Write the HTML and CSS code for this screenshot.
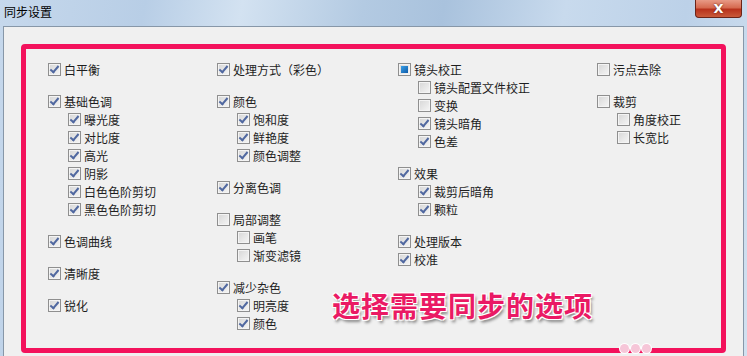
FILE: index.html
```html
<!DOCTYPE html>
<html lang="zh-CN">
<head>
<meta charset="utf-8">
<title>同步设置</title>
<link rel="stylesheet" href="styles.css">
</head>
<body>

<div class="window">
  <div class="titlebar">
    <span class="title">同步设置</span>
    <div class="close-button"><span class="close-x">X</span></div>
  </div>

  <div class="panel">
    <div class="frame">

      <div class="column">
        <div class="group">
          <div class="item"><span class="cb on"></span>白平衡</div>
        </div>
        <div class="group">
          <div class="item"><span class="cb on"></span>基础色调</div>
          <div class="item sub"><span class="cb on"></span>曝光度</div>
          <div class="item sub"><span class="cb on"></span>对比度</div>
          <div class="item sub"><span class="cb on"></span>高光</div>
          <div class="item sub"><span class="cb on"></span>阴影</div>
          <div class="item sub"><span class="cb on"></span>白色色阶剪切</div>
          <div class="item sub"><span class="cb on"></span>黑色色阶剪切</div>
        </div>
        <div class="group">
          <div class="item"><span class="cb on"></span>色调曲线</div>
        </div>
        <div class="group">
          <div class="item"><span class="cb on"></span>清晰度</div>
        </div>
        <div class="group">
          <div class="item"><span class="cb on"></span>锐化</div>
        </div>
      </div>

      <div class="column">
        <div class="group">
          <div class="item"><span class="cb on"></span>处理方式（彩色）</div>
        </div>
        <div class="group">
          <div class="item"><span class="cb on"></span>颜色</div>
          <div class="item sub"><span class="cb on"></span>饱和度</div>
          <div class="item sub"><span class="cb on"></span>鲜艳度</div>
          <div class="item sub"><span class="cb on"></span>颜色调整</div>
        </div>
        <div class="group">
          <div class="item"><span class="cb on"></span>分离色调</div>
        </div>
        <div class="group">
          <div class="item"><span class="cb"></span>局部调整</div>
          <div class="item sub"><span class="cb"></span>画笔</div>
          <div class="item sub"><span class="cb"></span>渐变滤镜</div>
        </div>
        <div class="group">
          <div class="item"><span class="cb on"></span>减少杂色</div>
          <div class="item sub"><span class="cb on"></span>明亮度</div>
          <div class="item sub"><span class="cb on"></span>颜色</div>
        </div>
      </div>

      <div class="column">
        <div class="group">
          <div class="item"><span class="cb mixed"></span>镜头校正</div>
          <div class="item sub"><span class="cb"></span>镜头配置文件校正</div>
          <div class="item sub"><span class="cb"></span>变换</div>
          <div class="item sub"><span class="cb on"></span>镜头暗角</div>
          <div class="item sub"><span class="cb on"></span>色差</div>
        </div>
        <div class="group">
          <div class="item"><span class="cb on"></span>效果</div>
          <div class="item sub"><span class="cb on"></span>裁剪后暗角</div>
          <div class="item sub"><span class="cb on"></span>颗粒</div>
        </div>
        <div class="group">
          <div class="item"><span class="cb on"></span>处理版本</div>
          <div class="item"><span class="cb on"></span>校准</div>
        </div>
      </div>

      <div class="column">
        <div class="group">
          <div class="item"><span class="cb"></span>污点去除</div>
        </div>
        <div class="group">
          <div class="item"><span class="cb"></span>裁剪</div>
          <div class="item sub"><span class="cb"></span>角度校正</div>
          <div class="item sub"><span class="cb"></span>长宽比</div>
        </div>
      </div>

      <div class="caption">选择需要同步的选项</div>
    </div>
  </div>

  <div class="watermark"><span></span><span></span><span></span></div>
</div>

</body>
</html>
```

FILE: styles.css
```css
body {
  margin: 0;
  width: 747px;
  height: 356px;
  overflow: hidden;
  font-family: "Noto Sans CJK SC", "Noto Sans", sans-serif;
  font-size: 12px;
  color: #1e1e1e;
}

.window {
  position: relative;
  height: 356px;
  overflow: hidden;
  background: linear-gradient(100deg, #c6d8ec 0%, #b8cee6 18%, #d3e2f1 30%, #b3cae2 45%, #a9c2dd 55%, #c8daed 70%, #bcd1e8 85%, #d2e1f0 100%);
}

.titlebar {
  display: flex;
  justify-content: space-between;
  align-items: flex-start;
  height: 26px;
  padding-left: 4px;
  padding-right: 5px;
}

.title {
  line-height: 24px;
  font-size: 12px;
  color: #000;
}

.close-button {
  flex: none;
  display: flex;
  justify-content: center;
  align-items: center;
  width: 45px;
  height: 17px;
  border: 1px solid #6b2418;
  border-top: none;
  border-radius: 0 0 4px 4px;
  background-color: #c8452c;
  background-image: linear-gradient(#e89a86 0%, #d66a50 45%, #b8321c 55%, #c95a3a 100%);
}

.close-x {
  color: #ffffff;
  font-family: "DejaVu Sans", sans-serif;
  font-weight: bold;
  font-size: 13px;
  line-height: 16px;
  text-shadow: 0 0 2px #5a1a10;
}

.panel {
  margin: 0 3px;
  padding: 17px 17px 3px;
  border: 1px solid #8797a8;
  background-color: #f0f0f0;
}

.frame {
  position: relative;
  display: grid;
  grid-template-columns: 169px 181px 199px 1fr;
  height: 309px;
  box-sizing: border-box;
  padding: 11px 0 0 22px;
  border: 5px solid #f3125c;
  border-radius: 4px;
}

.group {
  margin-bottom: 14px;
}

.item {
  display: flex;
  align-items: center;
  height: 18px;
  white-space: nowrap;
}

.item.sub {
  padding-left: 20px;
}

.cb {
  position: relative;
  flex: none;
  width: 11px;
  height: 11px;
  margin-right: 3px;
  border: 1px solid #8f8f8f;
  background: linear-gradient(135deg, #d6d6d6, #f6f6f6);
  box-shadow: inset 0 0 0 1px #f4f4f4;
}

.cb.on::after {
  content: "";
  position: absolute;
  left: 3px;
  top: 0px;
  width: 3px;
  height: 7px;
  border: solid #5068a0;
  border-width: 0 2px 2px 0;
  transform: rotate(40deg);
}

.cb.mixed::after {
  content: "";
  position: absolute;
  left: 2px;
  top: 2px;
  width: 7px;
  height: 7px;
  background: linear-gradient(135deg, #3aa0e8, #0e5aa8);
}

.caption {
  position: absolute;
  left: 306px;
  top: 236px;
  font-size: 28px;
  font-weight: bold;
  letter-spacing: 1px;
  color: #ea1a64;
  text-shadow: -1px -1px 0 #fff, 1px -1px 0 #fff, -1px 1px 0 #fff, 1px 1px 0 #fff, 2px 3px 3px rgba(0,0,0,0.45);
}

.watermark {
  position: absolute;
  left: 620px;
  top: 344px;
  display: flex;
  gap: 2px;
}

.watermark span {
  width: 9px;
  height: 9px;
  border-radius: 50%;
  background-color: #f6c6d8;
  box-shadow: 0 0 0 1px #fff;
}
```
